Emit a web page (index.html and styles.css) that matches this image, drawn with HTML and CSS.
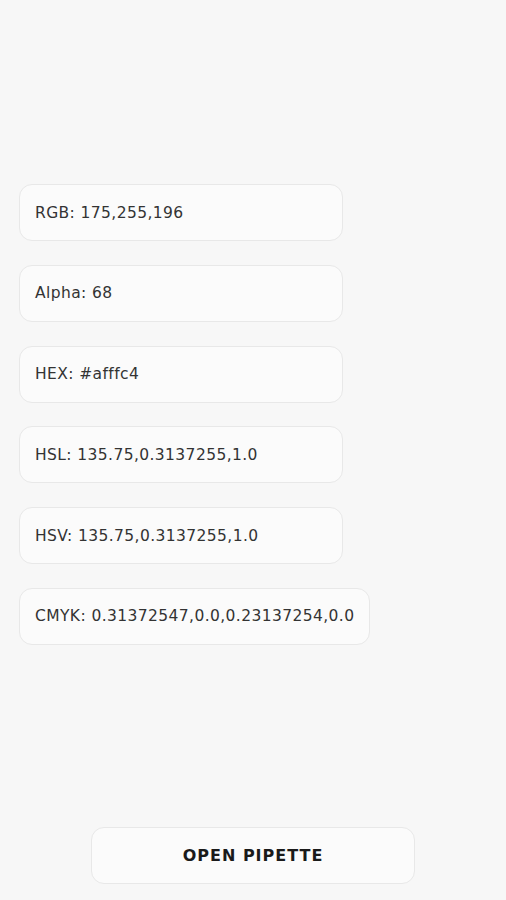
FILE: index.html
```html
<!DOCTYPE html>
<html lang="en">
<head>
  <meta charset="UTF-8">
  <meta name="viewport" content="width=device-width, initial-scale=1.0">
  <title>Color Picker</title>
  <link rel="stylesheet" href="styles.css">
</head>
<body>

  <main class="screen">
    <section class="values">
      <div class="value-card">RGB: 175,255,196</div>
      <div class="value-card">Alpha: 68</div>
      <div class="value-card">HEX: #afffc4</div>
      <div class="value-card">HSL: 135.75,0.3137255,1.0</div>
      <div class="value-card">HSV: 135.75,0.3137255,1.0</div>
      <div class="value-card">CMYK: 0.31372547,0.0,0.23137254,0.0</div>
    </section>

    <footer class="actions">
      <button class="pipette-btn">OPEN PIPETTE</button>
    </footer>
  </main>

</body>
</html>
```

FILE: styles.css
```css
/* Basic page */
body {
  margin: 0;
  background-color: #f7f7f7;
  color: #333;
  font-family: "DejaVu Sans", "Noto Sans", sans-serif;
}

.screen {
  height: 100vh;
  display: flex;
  flex-direction: column;
  box-sizing: border-box;
  padding: 184px 0 16px;
}

/* the list of colour values */
.values {
  display: flex;
  flex-direction: column;
  align-items: flex-start;
  gap: 23.8px;
  padding-left: 19px;
}

.value-card {
  box-sizing: border-box;
  min-width: 324px;
  height: 57px;
  padding: 0 15px;
  display: flex;
  align-items: center;
  background-color: #fbfbfb;
  border: 1px solid #e8e8e8;
  border-radius: 13px;
  font-size: 15.5px;
  letter-spacing: 0.4px;
  white-space: nowrap;
}

/* bottom button */
.actions {
  margin-top: auto;
  display: flex;
  justify-content: center;
}

.pipette-btn {
  width: 324px;
  height: 57px;
  background-color: #fbfbfb;
  border: 1px solid #e8e8e8;
  border-radius: 13px;
  font-family: "DejaVu Sans", "Noto Sans", sans-serif;
  font-weight: 700;
  font-size: 16px;
  letter-spacing: 1px;
  color: #1a1a1a;
}
```
